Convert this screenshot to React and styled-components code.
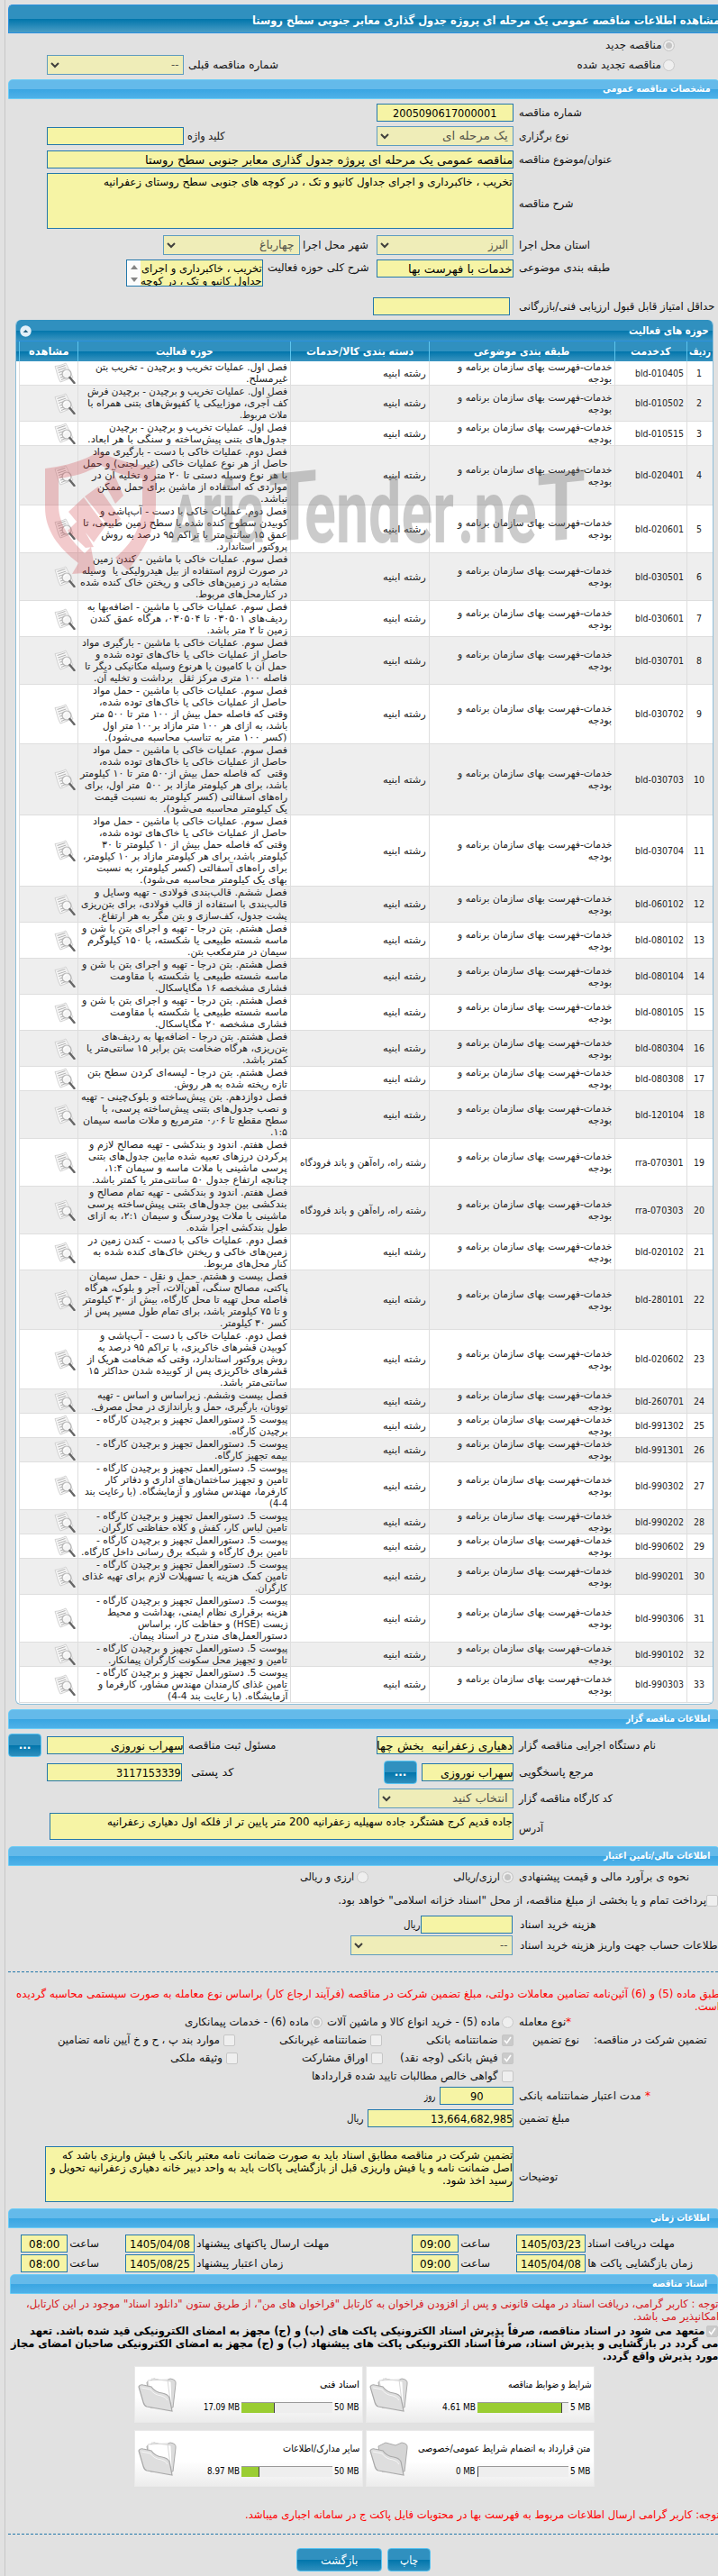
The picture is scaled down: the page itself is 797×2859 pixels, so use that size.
import { useLayoutEffect, useRef, useState } from "react";
import styled, { createGlobalStyle, css } from "styled-components";

const GlobalStyle = createGlobalStyle`
  html, body {
    margin: 0;
    padding: 0;
    background: #e1e1e1;
    overflow: hidden;
  }
  * {
    box-sizing: border-box;
  }
`;

const Page = styled.main`
  width: 797px;
  height: 2859px;
  overflow: hidden;
  position: relative;
  direction: rtl;
  padding-left: 5px;
  font-family: Tahoma, "DejaVu Sans", sans-serif;
  font-size: 12px;
  line-height: 14px;
  color: #111;
`;

const Frame = styled.div`
  height: 100%;
  border-left: 1px solid #c6c6c6;
  padding: 5px 0 0 3px;
`;

const FitBox = styled.span`
  display: block;
  flex: none;
  white-space: pre;
  width: ${({ $w }) => $w}px;
`;

const FitText = styled.span`
  display: inline-block;
  transform-origin: right center;
`;

// keeps a line of text at the given width
const Fit = ({ w, children }) => {
  const ref = useRef(null);
  const [ratio, setRatio] = useState(1);
  useLayoutEffect(() => {
    setRatio(w / ref.current.offsetWidth);
  }, [w, children]);
  return (
    <FitBox $w={w}>
      <FitText ref={ref} style={{ transform: `scaleX(${ratio})` }}>
        {children}
      </FitText>
    </FitBox>
  );
};

const TitleBar = styled.header`
  height: 32px;
  display: flex;
  align-items: center;
  margin-right: -2px;
  padding-top: 3px;
  border: 1px solid #2b90de;
  border-right: 0;
  border-radius: 5px 0 0 0;
  background: linear-gradient(#3090bf 0 50%, #0075ab 50%, #4a9dc5);
  color: #fff;
  font-weight: bold;
  font-size: 13px;
`;

const SectionBar = styled.h2`
  height: 22px;
  display: flex;
  align-items: center;
  margin: ${({ $top }) => $top}px ${({ $open }) => ($open ? "0" : "-2px")} 0
    ${({ $open }) => ($open ? "2px" : "0")};
  padding: 0 ${({ $open }) => ($open ? 11 : 10)}px 0 0;
  border: 1px solid #6accf6;
  border-radius: 5px 5px 0 0;
  background: linear-gradient(#64baea 0 48%, #38a5e2 48%, #4fb1e8);
  color: #fff;
  font-weight: bold;
  font-size: 11px;
`;

const Row = styled.div`
  display: flex;
  align-items: ${({ $align }) => $align || "center"};
  height: ${({ $h }) => $h || 22}px;
  margin-top: ${({ $top }) => $top || 0}px;
  padding-right: ${({ $pad }) => $pad || 0}px;
`;

const Label = styled.label`
  flex: none;
  display: flex;
  justify-content: flex-end;
  width: ${({ $w }) => $w}px;
  margin-right: ${({ $gap }) => $gap || 0}px;
  padding-top: ${({ $shift }) => ($shift || 0) * 2}px;
`;

const Star = styled.span`
  color: #f00;
  margin-left: ${({ $gap }) => $gap || 0}px;
`;

const Gap = styled.span`
  flex: none;
  width: ${({ $w }) => $w}px;
`;

const fieldBox = css`
  flex: none;
  display: flex;
  align-items: center;
  overflow: hidden;
  width: ${({ $w }) => $w}px;
  margin-right: ${({ $gap = 6 }) => $gap}px;
`;

const Field = styled.div`
  ${fieldBox}
  height: 20px;
  justify-content: ${({ $center }) => ($center ? "center" : "flex-start")};
  padding-top: 2px;
  border: 1px solid #2478ab;
  background: #f6f4a5;
  color: #000;
  font-size: 13px;
`;

const Area = styled.div`
  ${fieldBox}
  height: ${({ $h }) => $h}px;
  align-items: flex-start;
  justify-content: space-between;
  padding-top: 2px;
  border: 1px solid #2478ab;
  background: #f6f4a5;
  color: #000;
`;

const ScrollTrack = styled.span`
  display: flex;
  flex-direction: column;
  justify-content: space-between;
  align-items: center;
  width: 15px;
  height: 30px;
  margin-top: -2px;
  padding: 5px 0 6px;
  background: #fcfcfc;
`;

const Arrow = styled.i`
  border: 4px solid transparent;
  border-width: ${({ $up }) => ($up ? "0 4px 5px" : "5px 4px 0")};
  ${({ $up }) => ($up ? "border-bottom-color" : "border-top-color")}: #858585;
`;

const SelectBox = styled.div`
  ${fieldBox}
  height: 22px;
  justify-content: space-between;
  padding: 0 5px 0 3px;
  border: 1px solid #5e9cbf;
  background: #efedb8;
  color: #55544a;
  font-size: 13px;
`;

const Select = ({ w, gap, tw, children }) => (
  <SelectBox $w={w} $gap={gap}>
    <Fit w={tw}>{children}</Fit>
    <svg width="10" height="8" viewBox="0 0 10 8">
      <path d="M1 2l4 4 4-4" fill="none" stroke="#3f3f3c" strokeWidth="2" />
    </svg>
  </SelectBox>
);

const Radio = styled.span`
  flex: none;
  width: 13px;
  height: 13px;
  margin-right: ${({ $gap }) => $gap || 0}px;
  border: 1px solid #c8c8c8;
  border-radius: 50%;
  background: ${({ $on }) => ($on ? "#c4c4c4" : "#efefef")};
  box-shadow: inset 0 0 0 2px #efefef;
`;

const CheckBox = styled.span`
  flex: none;
  width: 13px;
  height: 13px;
  margin-right: ${({ $gap }) => $gap || 0}px;
  border: 1px solid #c6c6c6;
  border-radius: 2px;
  background: ${({ $on }) => ($on ? "#cacaca" : "#efefef")};
  svg {
    display: block;
  }
`;

const Check = ({ on, gap }) => (
  <CheckBox $on={on} $gap={gap}>
    {on && (
      <svg width="11" height="11" viewBox="0 0 11 11">
        <path d="M2 5.5l2.5 3L9 2" fill="none" stroke="#fff" strokeWidth="1.6" />
      </svg>
    )}
  </CheckBox>
);

const Button = styled.button`
  flex: none;
  width: ${({ $w }) => $w}px;
  height: 26px;
  margin: 0 ${({ $gap }) => $gap || 0}px 0 0;
  padding: 0;
  display: flex;
  align-items: center;
  justify-content: center;
  border: 1px solid #58c3f1;
  border-radius: 4px;
  background: linear-gradient(#3090bf 0 50%, #0075ab 50%, #2f8fbd);
  color: #fff;
  font: ${({ $bold }) => ($bold ? "bold 12px" : "13px")} Tahoma, "DejaVu Sans",
    sans-serif;
`;

const Note = styled.p`
  margin: ${({ $top }) => $top}px ${({ $out = -2 }) => $out}px 0 0;
  color: ${({ $color }) => $color || "#f00"};
  font-weight: ${({ $bold }) => ($bold ? "bold" : "normal")};
`;

const NoteLine = styled.span`
  display: flex;
  align-items: center;
  height: 14px;
`;

const Dashed = styled.hr`
  margin: ${({ $top }) => $top}px 0 0;
  border: 0;
  border-top: 1px dashed #2478ab;
`;

/* activity table */

const Table = styled.section`
  margin: 4px 5px 0 8px;
  padding: 0 0 1px 3px;
  border: 1px solid #8fbfd9;
  border-top: 0;
  border-radius: 6px;
  overflow: hidden;
  background: #fff;
  font-size: 11px;
  line-height: 13px;
  color: #222;
`;

const TableTitle = styled.div`
  height: 23px;
  display: flex;
  align-items: center;
  justify-content: space-between;
  margin-left: -3px;
  padding: 2px 4px 0 4px;
  background: linear-gradient(#3090bf 0 50%, #0075ab 50%, #3a94c0);
  color: #fff;
  font-weight: bold;
  font-size: 12px;
`;

const TableHead = styled.div`
  display: flex;
  height: 23px;
  margin-left: -3px;
  border-top: 1px solid #2b90de;
  background: linear-gradient(#3090bf 0 50%, #0075ab 50%, #3a94c0);
  color: #fff;
  font-weight: bold;
  font-size: 12px;
`;

const HeadCell = styled.div`
  width: ${({ $w }) => $w}px;
  display: flex;
  align-items: center;
  justify-content: center;
  border-left: 1px solid #5dc5ee;
`;

const TableRow = styled.div`
  display: flex;
  border-bottom: 1px solid #dedede;
  background: ${({ $even }) => ($even ? "#eee" : "#fff")};
`;

const Cell = styled.div`
  width: ${({ $w }) => $w}px;
  display: flex;
  flex-direction: column;
  justify-content: center;
  align-items: ${({ $center }) => ($center ? "center" : "flex-start")};
  padding: 0 3px 0 0;
  border-left: 1px solid #dedede;
`;

const ViewCell = styled(Cell)`
  align-items: flex-start;
  padding-right: 2px;
  svg {
    display: block;
  }
`;

const DocIcon = () => (
  <svg width="24" height="24" viewBox="0 0 24 24">
    <path d="M1 4.5C6 4 10 2.500 13 1L21 17C16 18 12 20.500 7 22C4 17 3 10 1 4.500Z" fill="#f7f7f7" stroke="#c9c9c9" strokeWidth=".8" />
    <path d="M3.500 6.500l9-3M4.300 9l9-3M5 11.500l8-2.600M6 14.200l4-1.300M7 17l4-1.200M8 19.500l6-2.500" stroke="#a9a9a9" strokeWidth=".9" />
    <circle cx="14" cy="13" r="5" fill="#f5f5f5" fillOpacity=".85" stroke="#b5b5b5" strokeWidth="1.200" />
    <path d="M11 12.500a3 3 0 0 1 3-2.500" fill="none" stroke="#fff" strokeWidth="1.200" />
    <path d="M17.500 17l5 6" stroke="#666" strokeWidth="2.400" strokeLinecap="round" />
  </svg>
);

const CollapseIcon = () => (
  <svg width="13" height="13" viewBox="0 0 13 13">
    <circle cx="6.500" cy="6.500" r="6.200" fill="#e2f0f8" />
    <path d="M3.700 8l2.800-3 2.800 3z" fill="#24607f" />
  </svg>
);

const building = "رشته ابنیه";
const road = "رشته راه، راه‌آهن و باند فرودگاه";

const items = [
  ["bld-010405", [["فصل اول. عملیات تخریب و برچیدن - تخریب بتن", 213], ["غیرمسلح.", 46]]],
  ["bld-010502", [["فصل اول. عملیات تخریب و برچیدن - برچیدن فرش", 222], ["کف آجری، موزاییکی یا کفپوش‌های بتنی همراه با", 223], ["ملات مربوط.", 53]]],
  ["bld-010515", [["فصل اول. عملیات تخریب و برچیدن - برچیدن", 198], ["جدول‌های بتنی پیش‌ساخته و سنگی با هر ابعاد.", 222]]],
  ["bld-020401", [["فصل دوم. عملیات خاکی با دست - بارگیری مواد", 216], ["حاصل از هر نوع عملیات خاکی (غیر لجنی) و حمل", 227], ["با هر نوع وسیله دستی تا ۲۰ متر و تخلیه آن در", 217], ["مواردی که استفاده از ماشین برای حمل ممکن", 211], ["نباشد.", 30]]],
  ["bld-020601", [["فصل دوم. عملیات خاکی با دست - آب‌پاشی و", 208], ["کوبیدن سطوح کنده شده یا سطح زمین طبیعی، تا", 227], ["عمق ۱۵ سانتی‌متر با تراکم ۹۵ درصد به روش", 207], ["پروکتور استاندارد.", 79]]],
  ["bld-030501", [["فصل سوم. عملیات خاکی با ماشین - کندن زمین", 216], ["در صورت لزوم استفاده از بیل هیدرولیکی یا  وسیله", 228], ["مشابه در زمین‌های خاکی و ریختن خاک کنده شده", 230], ["در کنارمحل‌های مربوط.", 102]]],
  ["bld-030601", [["فصل سوم. عملیات خاکی با ماشین - اضافه‌بها به", 222], ["ردیف‌های ۰۳۰۵۰۱ تا ۰۳۰۵۰۴، هرگاه عمق کندن", 219], ["زمین تا ۲ متر باشد.", 89]]],
  ["bld-030701", [["فصل سوم. عملیات خاکی با ماشین - بارگیری مواد", 228], ["حاصل از عملیات خاکی یا خاک‌های توده شده و", 213], ["حمل آن با کامیون یا هرنوع وسیله مکانیکی دیگر تا", 225], ["فاصله ۱۰۰ متری مرکز ثقل  برداشت و تخلیه آن.", 215]]],
  ["bld-030702", [["فصل سوم. عملیات خاکی با ماشین - حمل مواد", 216], ["حاصل از عملیات خاکی یا خاک‌های توده شده،", 209], ["وقتی که فاصله حمل بیش از ۱۰۰ متر تا ۵۰۰ متر", 218], ["باشد، به ازای هر ۱۰۰ متر مازاد بر۱۰۰ متر اول", 205], ["(کسر ۱۰۰ متر به تناسب محاسبه می‌شود).", 203]]],
  ["bld-030703", [["فصل سوم. عملیات خاکی با ماشین - حمل مواد", 216], ["حاصل از عملیات خاکی یا خاک‌های توده شده،", 209], ["وقتی  که فاصله حمل بیش از۵۰۰ متر تا ۱۰ کیلومتر", 230], ["باشد، برای هر کیلومتر مازاد بر ۵۰۰  متر اول، برای", 225], ["راه‌های آسفالتی (کسر کیلومتر به نسبت قیمت", 214], ["یک کیلومتر محاسبه می‌شود).", 138]]],
  ["bld-030704", [["فصل سوم. عملیات خاکی با ماشین - حمل مواد", 216], ["حاصل از عملیات خاکی یا خاک‌های توده شده،", 209], ["وقتی که فاصله حمل بیش از ۱۰ کیلومتر تا ۳۰", 206], ["کیلومتر باشد، برای هر کیلومتر مازاد بر ۱۰ کیلومتر،", 227], ["برای راه‌های آسفالتی (کسر کیلومتر، به نسبت", 212], ["بهای یک کیلومتر محاسبه می‌شود).", 164]]],
  ["bld-060102", [["فصل ششم. قالب‌بندی فولادی - تهیه وسایل و", 214], ["قالب‌بندی با استفاده از قالب فولادی، برای بتن‌ریزی", 229], ["پشت جدول، کف‌سازی و بتن مگر به هر ارتفاع.", 210]]],
  ["bld-080102", [["فصل هشتم. بتن درجا - تهیه و اجرای بتن با شن و", 228], ["ماسه شسته طبیعی یا شکسته، با ۱۵۰ کیلوگرم", 222], ["سیمان در مترمکعب بتن.", 111]]],
  ["bld-080104", [["فصل هشتم. بتن درجا - تهیه و اجرای بتن با شن و", 228], ["ماسه شسته طبیعی یا شکسته با مقاومت", 197], ["فشاری مشخصه ۱۶ مگاپاسکال.", 147]]],
  ["bld-080105", [["فصل هشتم. بتن درجا - تهیه و اجرای بتن با شن و", 228], ["ماسه شسته طبیعی یا شکسته با مقاومت", 197], ["فشاری مشخصه ۲۰ مگاپاسکال.", 147]]],
  ["bld-080304", [["فصل هشتم. بتن درجا - اضافه‌بها به ردیف‌های", 206], ["بتن‌ریزی، هرگاه ضخامت بتن برابر ۱۵ سانتی‌متر یا", 223], ["کمتر باشد.", 50]]],
  ["bld-080308", [["فصل هشتم. بتن درجا - لیسه‌ای کردن سطح بتن", 222], ["تازه ریخته شده به هر روش.", 126]]],
  ["bld-120104", [["فصل دوازدهم. بتن پیش‌ساخته و بلوک‌چینی - تهیه", 229], ["و نصب جدول‌های بتنی پیش‌ساخته پرسی، با", 206], ["سطح مقطع تا ۰٫۰۶ مترمربع و ملات ماسه سیمان", 227], ["۱:۵.", 19]]],
  ["rra-070301", [["فصل هفتم. اندود و بندکشی - تهیه مصالح لازم و", 220], ["پرکردن درزهای تعبیه شده مابین جدول‌های بتنی", 221], ["پرسی ماشینی با ملات ماسه و سیمان ۱:۴،", 203], ["چنانچه ارتفاع جدول ۵۰ سانتی‌متر یا کمتر باشد.", 217]], road],
  ["rra-070303", [["فصل هفتم. اندود و بندکشی - تهیه تمام مصالح و", 220], ["بندکشی بین جدول‌های بتنی پیش‌ساخته پرسی", 222], ["ماشینی با ملات پودرسنگ و سیمان ۲:۱، به ازای", 222], ["طول بندکشی اجرا شده.", 113]], road],
  ["bld-020102", [["فصل دوم. عملیات خاکی با دست - کندن زمین در", 221], ["زمین‌های خاکی و ریختن خاک‌های کنده شده به", 216], ["کنار محل‌های مربوط.", 93]]],
  ["bld-280101", [["فصل بیست و هشتم. حمل و نقل - حمل سیمان", 220], ["پاکتی، مصالح سنگی، آهن‌آلات، آجر و بلوک، هرگاه", 225], ["فاصله محل تهیه تا محل کارگاه، بیش از ۳۰ کیلومتر", 227], ["و تا ۷۵ کیلومتر باشد، برای تمام طول مسیر پس از", 225], ["کسر ۳۰ کیلومتر.", 75]]],
  ["bld-020602", [["فصل دوم. عملیات خاکی با دست - آب‌پاشی و", 208], ["کوبیدن قشرهای خاکریزی، با تراکم ۹۵ درصد به", 211], ["روش پروکتور استاندارد، وقتی که ضخامت هریک از", 222], ["قشرهای خاکریزی پس از کوبیده شدن حداکثر ۱۵", 221], ["سانتی‌متر باشد.", 75]]],
  ["bld-260701", [["فصل بیست وششم. زیراساس و اساس - تهیه", 211], ["توونان، بارگیری، حمل و باراندازی در محل مصرف.", 218]]],
  ["bld-991302", [["پیوست 5. دستورالعمل تجهیز و برچیدن کارگاه -", 212], ["برچیدن کارگاه.", 65]]],
  ["bld-991301", [["پیوست 5. دستورالعمل تجهیز و برچیدن کارگاه -", 212], ["بیمه تجهیز کارگاه.", 81]]],
  ["bld-990302", [["پیوست 5. دستورالعمل تجهیز و برچیدن کارگاه -", 212], ["تامین و تجهیز ساختمان‌های اداری و دفاتر کار", 202], ["کارفرما، مهندس مشاور و آزمایشگاه. (با رعایت بند", 225], ["4-4)", 20]]],
  ["bld-990202", [["پیوست 5. دستورالعمل تجهیز و برچیدن کارگاه -", 212], ["تامین لباس کار، کفش و کلاه حفاظتی کارگران.", 210]]],
  ["bld-990602", [["پیوست 5. دستورالعمل تجهیز و برچیدن کارگاه -", 212], ["تامین برق کارگاه و شبکه برق رسانی داخل کارگاه.", 229]]],
  ["bld-990201", [["پیوست 5. دستورالعمل تجهیز و برچیدن کارگاه -", 212], ["تامین کمک هزینه یا تسهیلات لازم برای تهیه غذای", 228], ["کارگران.", 36]]],
  ["bld-990306", [["پیوست 5. دستورالعمل تجهیز و برچیدن کارگاه -", 212], ["هزینه برقراری نظام ایمنی، بهداشت و محیط", 200], ["زیست (HSE) و حفاظت کار، براساس", 167], ["دستورالعمل‌های مندرج در اسناد پیمان.", 176]]],
  ["bld-990102", [["پیوست 5. دستورالعمل تجهیز و برچیدن کارگاه -", 212], ["تامین و تجهیز محل سکونت کارگران پیمانکار.", 199]]],
  ["bld-990303", [["پیوست 5. دستورالعمل تجهیز و برچیدن کارگاه -", 212], ["تامین غذای کارمندان مهندس مشاور، کارفرما و", 210], ["آزمایشگاه. (با رعایت بند 4-4)", 133]]],
];

const heads = [
  ["ردیف", 29, 24],
  ["کدخدمت", 80, 45],
  ["طبقه بندی موضوعی", 206, 106],
  ["دسته بندی کالا/خدمات", 154, 119],
  ["حوزه فعالیت", 236, 64],
  ["مشاهده", 65, 44],
];

const ActivityTable = () => (
  <Table>
    <TableTitle>
      <Fit w={89}>حوزه های فعالیت</Fit>
      <CollapseIcon />
    </TableTitle>
    <TableHead>
      {heads.map(([text, w, tw]) => (
        <HeadCell key={text} $w={w}>
          <Fit w={tw}>{text}</Fit>
        </HeadCell>
      ))}
    </TableHead>
    {items.map(([code, lines, group = building], i) => (
      <TableRow key={code} $even={i % 2 === 1}>
        <Cell $w={29} $center>
          <Fit w={i < 9 ? 6 : 12}>{String(i + 1)}</Fit>
        </Cell>
        <Cell $w={80}>
          <Fit w={54}>{code}</Fit>
        </Cell>
        <Cell $w={206}>
          <Fit w={172}>خدمات-فهرست بهای سازمان برنامه و</Fit>
          <Fit w={26}>بودجه</Fit>
        </Cell>
        <Cell $w={154}>
          <Fit w={group === road ? 140 : 48}>{group}</Fit>
        </Cell>
        <Cell $w={236}>
          {lines.map(([text, w]) => (
            <Fit key={text} w={w}>
              {text}
            </Fit>
          ))}
        </Cell>
        <ViewCell $w={65}>
          <DocIcon />
        </ViewCell>
      </TableRow>
    ))}
  </Table>
);

const Watermark = styled.svg`
  position: absolute;
  left: 44px;
  top: 495px;
  direction: ltr;
  pointer-events: none;
  text {
    font-family: Roboto, sans-serif;
    font-weight: 700;
  }
`;

// [text, x, width, font size, slant of the bar]
const brandParts = [
  ["A", 146, 32, 75, 0],
  ["ria", 180, 70, 98, 0],
  ["T", 254, 54, 106, -6],
  ["ender", 294, 166, 98, 0],
  [".ne", 464, 88, 98, 0],
  ["T", 552, 54, 106, -6],
];

const Brand = () => (
  <Watermark width="620" height="145" viewBox="0 0 620 145">
    <g fill="#cf3b41" fillOpacity=".27">
      <path d="M6 25C30 22 50 16 66 6C84 16 105 20 129 24V66C129 92 116 115 98 138L84 124C103 108 114 88 114 66V36C96 34 82 29 67 21C53 30 37 34 21 36V68C22 88 34 104 50 119L57 112L62 140L36 142L43 130C20 112 6 93 6 68Z" />
      <path d="M32 73l17-16 24 32-13 18zM50 56l15-11 25 36-11 11zM72 42l11-10 10 23-9 9zM31 94l12-12 17 30-9 1z" />
    </g>
    <g fill="#777" fillOpacity=".38">
      {brandParts.map(([text, x, w, size, skew]) => (
        <text
          key={x}
          transform={`translate(${x} 107) skewY(${skew})`}
          textLength={w}
          lengthAdjust="spacingAndGlyphs"
          fontSize={size}
        >
          {text}
        </text>
      ))}
    </g>
  </Watermark>
);

/* document cards */

const Cards = styled.div`
  display: grid;
  grid-template-columns: 254px 254px;
  gap: 8px 3px;
  margin: 4px 137px 0 0;
`;

const Card = styled.div`
  height: 63px;
  display: flex;
  align-items: center;
  justify-content: space-between;
  padding: 0 3px;
  border: 1px solid #e9e9e9;
  background: linear-gradient(#fff 0 55%, #ececec);
  font-size: 11px;
  color: #000;
`;

const CardBody = styled.div`
  display: flex;
  flex-direction: column;
  gap: 11px;
  padding-top: 3px;
`;

const Meter = styled.div`
  display: flex;
  align-items: center;
  gap: 2px;
`;

const MeterTrack = styled.div`
  direction: ltr;
  width: 101px;
  height: 12px;
  border-top: 1px solid #999;
  background: #eee;
`;

const MeterFill = styled.div`
  height: 100%;
  border-right: 1px solid #444;
  background: #9acd32;
`;

const FolderIcon = ({ empty }) => (
  <svg width="44" height="38" viewBox="0 0 44 38">
    <path d="M10 5l8-4 11 3 7-3q7 1 6 6l-3 26H14z" fill={empty ? "#d5d5d5" : "#dcdcdc"} stroke="#aaa" />
    {!empty && (
      <path d="M11 3l22-1 3 24-20 4zM15 1l22 3 1 24" fill="#fff" stroke="#d8d8d8" />
    )}
    <path d="M1 10q1-3 5-2l9 2q4 6 12 7 6 1 8 5l3 15L10 32Q7 31 6 27z" fill="#dedede" stroke="#a9a9a9" strokeWidth="1.200" />
    <path d="M4 11l10 2q4 6 12 7 5 1 7 5" fill="none" stroke="#f5f5f5" />
  </svg>
);

const docs = [
  { title: "شرایط و ضوابط مناقصه", w: 93, max: "5 MB", mw: 23, used: "4.61 MB", uw: 37, fill: 94 },
  { title: "اسناد فنی", w: 44, max: "50 MB", mw: 28, used: "17.09 MB", uw: 40, fill: 37 },
  { title: "متن قرارداد به انضمام شرایط عمومی/خصوصی", w: 192, max: "5 MB", mw: 23, used: "0 MB", uw: 22, fill: 1 },
  { title: "سایر مدارک/اطلاعات", w: 85, max: "50 MB", mw: 28, used: "8.97 MB", uw: 36, fill: 20 },
];

const Latin = styled.span`
  unicode-bidi: isolate;
  direction: ltr;
`;

const times = [
  {
    first: ["مهلت دریافت اسناد", 97, "1405/03/23", "09:00"],
    second: ["مهلت ارسال پاکتهای پیشنهاد", 147, "1405/04/08", "08:00"],
  },
  {
    first: ["زمان بازگشایی پاکت ها", 117, "1405/04/08", "09:00"],
    second: ["زمان اعتبار پیشنهاد", 96, "1405/08/25", "08:00"],
  },
];

const TimeGroup = ({ label, w, tw, date, hour }) => (
  <>
    <Label $w={w}>
      <Fit w={tw}>{label}</Fit>
    </Label>
    <Field $w={77} $gap={2} $center>
      <Fit w={67}>{date}</Fit>
    </Field>
    <Label $w={62}>
      <Fit w={33}>ساعت</Fit>
    </Label>
    <Field $w={52} $gap={2} $center>
      <Fit w={34}>{hour}</Fit>
    </Field>
  </>
);

const App = () => {
  return (
    <Page>
      <GlobalStyle />
      <Frame>
        <TitleBar>
          <Fit w={519}>مشاهده اطلاعات مناقصه عمومی یک مرحله ای پروژه جدول گذاری معابر جنوبی سطح روستا</Fit>
        </TitleBar>
        <Row $top={2} $pad={48}>
          <Radio $on />
          <Gap $w={2} />
          <Fit w={62}>مناقصه جدید</Fit>
        </Row>
        <Row $pad={48}>
          <Radio />
          <Gap $w={2} />
          <Fit w={94}>مناقصه تجدید شده</Fit>
          <Label $w={100} $gap={331}>
            <Fit w={100}>شماره مناقصه قبلی</Fit>
          </Label>
          <Select w={152} gap={5} tw={8}>--</Select>
        </Row>

        <SectionBar $top={5}>
          <Fit w={119}>مشخصات مناقصه عمومی</Fit>
        </SectionBar>
        <Row $top={4}>
          <Label $w={221}><Fit w={70}>شماره مناقصه</Fit></Label>
          <Field $w={152} $center><Fit w={115}>2005090617000001</Fit></Field>
        </Row>
        <Row $top={4}>
          <Label $w={221}><Fit w={55}>نوع برگزاری</Fit></Label>
          <Select w={152} tw={73}>یک مرحله ای</Select>
          <Label $w={210}><Fit w={42}>کلید واژه</Fit></Label>
          <Field $w={152} $gap={4} />
        </Row>
        <Row $top={4}>
          <Label $w={221}><Fit w={103}>عنوان/موضوع مناقصه</Fit></Label>
          <Field $w={518}>
            <Fit w={408}>مناقصه عمومی یک مرحله ای پروژه جدول گذاری معابر جنوبی سطح روستا</Fit>
          </Field>
        </Row>
        <Row $top={4} $h={62}>
          <Label $w={221} $shift={3}><Fit w={61}>شرح مناقصه</Fit></Label>
          <Area $w={518} $h={62}>
            <Fit w={454}>تخریب ، خاکبرداری و اجرای جداول کانیو و تک ، در کوچه های جنوبی سطح روستای زعفرانیه</Fit>
          </Area>
        </Row>
        <Row $top={7}>
          <Label $w={221}><Fit w={79}>استان محل اجرا</Fit></Label>
          <Select w={152} tw={22}>البرز</Select>
          <Label $w={82}><Fit w={73}>شهر محل اجرا</Fit></Label>
          <Select w={152} gap={3} tw={39}>چهارباغ</Select>
        </Row>
        <Row $top={5} $h={30} $align="flex-start">
          <Label $w={221} $shift={1}><Fit w={101}>طبقه بندی موضوعی</Fit></Label>
          <Field $w={152}><Fit w={116}>خدمات با فهرست بها</Fit></Field>
          <Label $w={122} $shift={1}><Fit w={113}>شرح کلی حوزه فعالیت</Fit></Label>
          <Area $w={152} $h={30} $gap={4}>
            <div>
              <Fit w={134}>تخریب ، خاکبرداری و اجرای</Fit>
              <Fit w={135}>جداول کانیو و تک ، در کوچه</Fit>
            </div>
            <ScrollTrack>
              <Arrow $up />
              <Arrow />
            </ScrollTrack>
          </Area>
        </Row>
        <Row $top={11}>
          <Label $w={221}><Fit w={217}>حداقل امتیاز قابل قبول ارزیابی فنی/بازرگانی</Fit></Label>
          <Field $w={152} $gap={10} />
        </Row>

        <ActivityTable />

        <SectionBar $top={5}>
          <Fit w={93}>اطلاعات مناقصه گزار</Fit>
        </SectionBar>
        <Row $top={5} $h={26}>
          <Label $w={221}><Fit w={152}>نام دستگاه اجرایی مناقصه گزار</Fit></Label>
          <Field $w={152}><Fit w={151}>دهیاری زعفرانیه  بخش چها</Fit></Field>
          <Label $w={209}><Fit w={97}>مسئول ثبت مناقصه</Fit></Label>
          <Field $w={152} $gap={5}><Fit w={80}>سهراب نوروزی</Fit></Field>
          <Button $w={37} $gap={6} $bold>...</Button>
        </Row>
        <Row $top={4} $h={26}>
          <Label $w={221}><Fit w={83}>مرجع پاسخگویی</Fit></Label>
          <Field $w={102}><Fit w={80}>سهراب نوروزی</Fit></Field>
          <Button $w={37} $gap={5} $bold>...</Button>
          <Label $w={215}><Fit w={48}>کد پستی</Fit></Label>
          <Field $w={150} $gap={9}><Fit w={72}>3117153339</Fit></Field>
        </Row>
        <Row $top={5}>
          <Label $w={221}><Fit w={104}>کد کارگاه مناقصه گزار</Fit></Label>
          <Select w={150} tw={62}>انتخاب کنید</Select>
        </Row>
        <Row $top={5} $h={30}>
          <Label $w={221} $shift={2}><Fit w={27}>آدرس</Fit></Label>
          <Area $w={515} $h={30}>
            <Fit w={450}>جاده قدیم کرج هشتگرد جاده سهیلیه زعفرانیه 200 متر پایین تر از فلکه اول دهیاری زعفرانیه</Fit>
          </Area>
        </Row>

        <SectionBar $top={7}>
          <Fit w={118}>اطلاعات مالی/تامین اعتبار</Fit>
        </SectionBar>
        <Row $top={1}>
          <Label $w={221}><Fit w={189}>نحوه ی برآورد مالی و قیمت پیشنهادی</Fit></Label>
          <Radio $on $gap={6} />
          <Gap $w={2} />
          <Fit w={52}>ارزی/ریالی</Fit>
          <Radio $gap={94} />
          <Gap $w={3} />
          <Fit w={60}>ارزی و ریالی</Fit>
        </Row>
        <Row $top={4}>
          <Check />
          <Fit w={409}>پرداخت تمام و یا بخشی از مبلغ مناقصه، از محل "اسناد خزانه اسلامی" خواهد بود.</Fit>
        </Row>
        <Row $top={5}>
          <Label $w={220}><Fit w={85}>هزینه خرید اسناد</Fit></Label>
          <Field $w={102} $gap={8} />
          <Fit w={19}>ریال</Fit>
        </Row>
        <Row $top={1}>
          <Label $w={220}><Fit w={223}>اطلاعات حساب جهت واریز هزینه خرید اسناد</Fit></Label>
          <Select w={180} gap={8} tw={8}>--</Select>
        </Row>
        <Dashed $top={18} />
        <Note $top={17}>
          <NoteLine>
            <Fit w={781}>طبق ماده (5) و (6) آئین‌نامه تضامین معاملات دولتی، مبلغ تضمین شرکت در مناقصه (فرآیند ارجاع کار) براساس نوع معامله به صورت سیستمی محاسبه گردیده</Fit>
          </NoteLine>
          <NoteLine><Fit w={28}>است.</Fit></NoteLine>
        </Note>
        <Row $h={20}>
          <Label $w={221}>
            <Star>*</Star>
            <Fit w={52}>نوع معامله</Fit>
          </Label>
          <Radio $gap={6} />
          <Gap $w={2} />
          <Fit w={192}>ماده (5) - خرید انواع کالا و ماشین آلات</Fit>
          <Radio $gap={5} $on />
          <Gap $w={2} />
          <Fit w={138}>ماده (6) - خدمات پیمانکاری</Fit>
        </Row>
        <Row $h={20} $pad={12}>
          <Fit w={126}>تضمین شرکت در مناقصه:</Fit>
          <Gap $w={16} />
          <Fit w={52}>نوع تضمین</Fit>
          <Check on gap={21} />
          <Gap $w={4} />
          <Fit w={80}>ضمانتنامه بانکی</Fit>
          <Check gap={49} />
          <Gap $w={4} />
          <Fit w={97}>ضمانتنامه غیربانکی</Fit>
          <Check gap={49} />
          <Gap $w={4} />
          <Fit w={180}>موارد بند پ ، ح و خ آیین نامه تضامین</Fit>
        </Row>
        <Row $h={20} $pad={227}>
          <Check on />
          <Gap $w={4} />
          <Fit w={109}>فیش بانکی (وجه نقد)</Fit>
          <Check gap={19} />
          <Gap $w={4} />
          <Fit w={73}>اوراق مشارکت</Fit>
          <Check gap={71} />
          <Gap $w={4} />
          <Fit w={58}>وثیقه ملکی</Fit>
        </Row>
        <Row $h={20} $pad={227}>
          <Check />
          <Gap $w={4} />
          <Fit w={207}>گواهی خالص مطالبات تایید شده قراردادها</Fit>
        </Row>
        <Row $top={1}>
          <Label $w={221}>
            <Star $gap={4}>*</Star>
            <Fit w={136}>مدت اعتبار ضمانتنامه بانکی</Fit>
          </Label>
          <Field $w={82} $center><Fit w={15}>90</Fit></Field>
          <Gap $w={5} />
          <Fit w={12}>روز</Fit>
        </Row>
        <Row $top={3}>
          <Label $w={221}><Fit w={57}>مبلغ تضمین</Fit></Label>
          <Field $w={162}><Fit w={91}>13,664,682,985</Fit></Field>
          <Gap $w={4} />
          <Fit w={19}>ریال</Fit>
        </Row>
        <Row $top={20} $h={62}>
          <Label $w={221} $shift={3}><Fit w={43}>توضیحات</Fit></Label>
          <Area $w={520} $h={62}>
            <div>
              <Fit w={500}>تضمین شرکت در مناقصه مطابق اسناد باید به صورت ضمانت نامه معتبر بانکی یا فیش واریزی باشد که</Fit>
              <Fit w={513}>اصل ضمانت نامه و یا فیش واریزی قبل از بازگشایی پاکات باید به واحد دبیر خانه دهیاری زعفرانیه تحویل و</Fit>
              <Fit w={78}>رسید اخذ شود.</Fit>
            </div>
          </Area>
        </Row>

        <SectionBar $top={7}>
          <Fit w={66}>اطلاعات زمانی</Fit>
        </SectionBar>
        {times.map(({ first, second }, i) => (
          <Row key={first[0]} $top={i === 0 ? 6 : 0}>
            <TimeGroup label={first[0]} w={145} tw={first[1]} date={first[2]} hour={first[3]} />
            <TimeGroup label={second[0]} w={239} tw={second[1]} date={second[2]} hour={second[3]} />
          </Row>
        ))}

        <SectionBar $top={1} $open>
          <Fit w={61}>اسناد مناقصه</Fit>
        </SectionBar>
        <Note $top={4} $out={-1} $color="#d6181c">
          <NoteLine>
            <Fit w={769}>توجه : کاربر گرامی، دریافت اسناد در مهلت قانونی و پس از افزودن فراخوان به کارتابل "فراخوان های من"، از طریق ستون "دانلود اسناد" موجود در این کارتابل،</Fit>
          </NoteLine>
          <NoteLine><Fit w={96}>امکانپذیر می باشد.</Fit></NoteLine>
        </Note>
        <Note $top={2} $out={0} $color="#000" $bold>
          <NoteLine>
            <Check on />
            <Gap $w={2} />
            <Fit w={749}>متعهد می شود در اسناد مناقصه، صرفاً پذیرش اسناد الکترونیکی پاکت های (ب) و (ج) مجهز به امضای الکترونیکی قید شده باشد. تعهد</Fit>
          </NoteLine>
          <NoteLine>
            <Fit w={785}>می گردد در بازگشایی و پذیرش اسناد، صرفاً اسناد الکترونیکی پاکت های پیشنهاد (ب) و (ج) مجهز به امضای الکترونیکی صاحبان امضای مجاز</Fit>
          </NoteLine>
          <NoteLine><Fit w={128}>مورد پذیرش واقع گردد.</Fit></NoteLine>
        </Note>
        <Cards>
          {docs.map((d) => (
            <Card key={d.title}>
              <CardBody>
                <Fit w={d.w}>{d.title}</Fit>
                <Meter>
                  <Fit w={d.mw}><Latin>{d.max}</Latin></Fit>
                  <MeterTrack>
                    <MeterFill style={{ width: d.fill }} />
                  </MeterTrack>
                  <Fit w={d.uw}><Latin>{d.used}</Latin></Fit>
                </Meter>
              </CardBody>
              <FolderIcon empty={d.fill === 1} />
            </Card>
          ))}
        </Cards>
        <Note $top={24}>
          <NoteLine>
            <Fit w={527}>توجه: کاربر گرامی ارسال اطلاعات مربوط به فهرست بها در محتویات فایل پاکت ج در سامانه اجباری میباشد.</Fit>
          </NoteLine>
        </Note>
        <Dashed $top={14} />
        <Row $top={15} $h={26} $pad={319}>
          <Button $w={48}><Fit w={20}>چاپ</Fit></Button>
          <Button $w={95} $gap={6}><Fit w={41}>بازگشت</Fit></Button>
        </Row>
      </Frame>
      <Brand />
    </Page>
  );
};

export default App;
